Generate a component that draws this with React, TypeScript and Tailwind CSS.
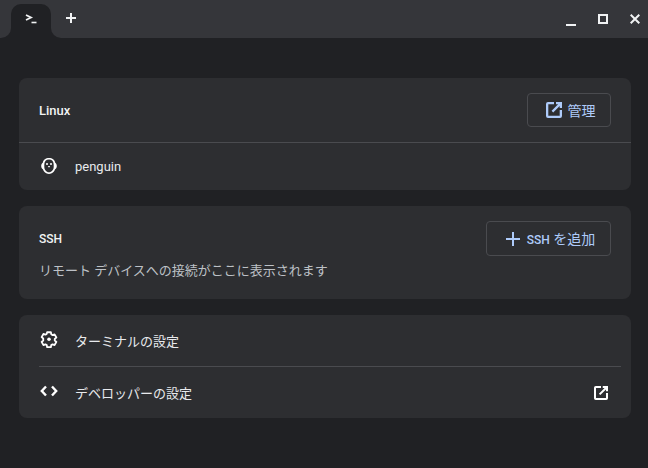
import React from 'react';

const ExternalIcon: React.FC<{ className?: string }> = ({ className }) => (
  <svg viewBox="0 0 16 16" className={className} fill="currentColor">
    <path d="M2 0h6v2.300H2.300v11.400h11.400V8H16v6a2 2 0 0 1-2 2H2a2 2 0 0 1-2-2V2a2 2 0 0 1 2-2z" />
    <path d="M10 0h6v6h-2.300V3.900L7.200 10.400 5.600 8.800l6.500-6.500H10z" />
  </svg>
);

const Divider: React.FC<{ className?: string }> = ({ className }) => <div className={`h-px bg-[#4a4b4f] ${className ?? ''}`}></div>;

export default function App() {
  return (
    <div className="w-[648px] h-[468px] overflow-hidden bg-[#202124] text-[13px] text-[#e8eaed]" style={{ fontFamily: 'Roboto, "Noto Sans CJK JP", sans-serif' }}>
      {/* Title bar */}
      <div className="h-[38px] bg-[#35363a] flex items-end">
        <div className="relative ml-[11px] w-[40px] h-[34px] bg-[#202124] rounded-t-[10px] flex items-center justify-center">
          <span className="absolute left-[-11px] bottom-0 w-[11px] h-[11px] bg-[#202124]">
            <span className="block w-full h-full bg-[#35363a] rounded-br-[10px]"></span>
          </span>
          <span className="absolute right-[-11px] bottom-0 w-[11px] h-[11px] bg-[#202124]">
            <span className="block w-full h-full bg-[#35363a] rounded-bl-[10px]"></span>
          </span>
          <svg viewBox="0 0 12 10" className="w-[12px] h-[10px] mb-[4px] mr-[1px] text-[#f1f3f4]" fill="none" stroke="currentColor">
            <path d="M1 1 6 3.500 1 6" strokeWidth="1.800" />
            <path d="M6.500 8.500h5" strokeWidth="1.600" />
          </svg>
        </div>
        <div className="ml-[14px] h-[38px] flex items-center">
          <svg viewBox="0 0 12 12" className="w-[12px] h-[12px] mb-[2px] text-[#f1f3f4]" fill="none" stroke="currentColor" strokeWidth="2">
            <path d="M6 1v10M1 6h10" />
          </svg>
        </div>
        <div className="ml-auto h-[38px] flex items-center text-[#f1f3f4]">
          <svg viewBox="0 0 10 10" className="w-[10px] h-[10px] mt-[6px] mr-[22px]" fill="currentColor">
            <rect x="0" y="7" width="10" height="2" />
          </svg>
          <svg viewBox="0 0 10 10" className="w-[10px] h-[10px] mr-[22px]" fill="none" stroke="currentColor" strokeWidth="2">
            <rect x="1" y="1" width="8" height="8" />
          </svg>
          <svg viewBox="0 0 10 10" className="w-[10px] h-[10px] mr-[8px]" fill="none" stroke="currentColor" strokeWidth="2">
            <path d="M.7.7l8.600 8.600M9.300.7.700 9.300" />
          </svg>
        </div>
      </div>

      <main className="pt-[40px] px-[19px] pr-[17px] flex flex-col gap-[16px]">
        {/* Linux */}
        <section className="h-[112px] bg-[#2d2e31] rounded-[8px] flex flex-col">
          <div className="h-[64px] px-[20px] flex items-center justify-between">
            <span className="font-medium text-[#f1f3f4] mt-[2px]">Linux</span>
            <button className="w-[84px] h-[34px] border border-[#4a4b4f] rounded-[4px] flex items-center justify-center gap-[6px] text-[#aecbfa] text-[14px] pl-[3px]">
              <ExternalIcon className="w-[16px] h-[16px]" />
              <span className="mt-[2px]">管理</span>
            </button>
          </div>
          <Divider />
          <div className="flex-1 px-[20px] flex items-center">
            <svg viewBox="0 0 20 20" className="w-[20px] h-[20px] mb-[2px] text-white" fill="currentColor" fillRule="evenodd">
              <path d="M10 2c3.300 0 5.800 2 6.200 4.800.9.600 1.600 1.700 1.600 3.200s-.7 2.600-1.700 3.200C15.400 15.500 13 17.900 10 17.900S4.600 15.500 3.900 13.200C2.900 12.600 2.200 11.500 2.200 10s.7-2.600 1.600-3.200C4.200 4 6.700 2 10 2zm0 1.600c-2.900 0-4.700 2-4.700 4.900v2.500c0 2.600 2 5.300 4.700 5.300s4.700-2.700 4.700-5.300V8.500c0-2.900-1.800-4.900-4.700-4.900z" />
              <circle cx="8" cy="8" r="1" />
              <circle cx="12" cy="8" r="1" />
              <path d="M8.800 10h2.400L10 11.800z" />
            </svg>
            <span className="ml-[16px] text-[#e8eaed]">penguin</span>
          </div>
        </section>

        {/* SSH */}
        <section className="h-[93px] bg-[#2d2e31] rounded-[8px] px-[20px] relative">
          <div className="flex items-start justify-between pt-[15px]">
            <span className="font-medium text-[#f1f3f4] text-[12px] leading-[4px] mt-[16px]">SSH</span>
            <button className="w-[125px] h-[35px] border border-[#4a4b4f] rounded-[4px] flex items-center justify-center gap-[7px] text-[#aecbfa] text-[14px] pl-[4px]">
              <svg viewBox="0 0 14 14" className="w-[14px] h-[14px]" fill="none" stroke="currentColor" strokeWidth="2">
                <path d="M7 0v14M0 7h14" />
              </svg>
              <span className="font-medium mt-[2px]"><span className="text-[12px]">SSH</span> <span className="font-normal">を追加</span></span>
            </button>
          </div>
          <p className="mt-[5px] text-[#bdc1c6] leading-[20px]">リモート デバイスへの接続がここに表示されます</p>
        </section>

        {/* Settings */}
        <section className="h-[103px] bg-[#2d2e31] rounded-[8px] flex flex-col pl-[20px] pr-[10px]">
          <div className="h-[51px] flex items-center">
            <svg viewBox="0 0 20 20" className="w-[18px] h-[18px] ml-[1px] mr-[1px] mb-[3px] text-white" fill="none" stroke="currentColor" strokeWidth="2" strokeLinejoin="round">
              <path d="M7.900 2.500h4.200l.4 2.300 1.500.9 2.200-.8 2 3.500-1.800 1.500v1.800l1.800 1.500-2 3.500-2.200-.8-1.500.9-.4 2.300H7.900l-.4-2.300-1.500-.9-2.200.8-2-3.500 1.800-1.500V9.400L1.800 7.900l2-3.500 2.200.8 1.500-.9z" />
              <circle cx="10" cy="10.300" r="2" fill="currentColor" stroke="none" />
            </svg>
            <span className="ml-[16px] mt-[2px]">ターミナルの設定</span>
          </div>
          <Divider />
          <div className="flex-1 flex items-center">
            <svg viewBox="0 0 20 20" className="w-[20px] h-[20px] mb-[3px] text-white" fill="none" stroke="currentColor" strokeWidth="2.400">
              <path d="M7 5.500 2.800 10 7 14.500M13 5.500 17.200 10 13 14.500" />
            </svg>
            <span className="ml-[16px] mt-[2px]">デベロッパーの設定</span>
            <ExternalIcon className="w-[14px] h-[14px] ml-auto mr-[13px] text-white" />
          </div>
        </section>
      </main>
    </div>
  );
}
